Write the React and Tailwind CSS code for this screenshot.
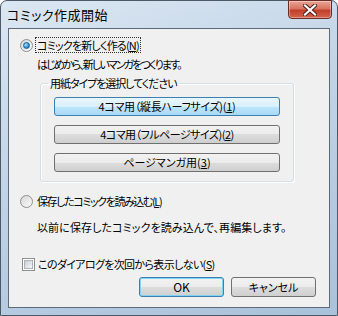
import React from 'react'

const font = "font-['Noto_Sans_CJK_JP','Liberation_Sans',sans-serif]"

const Radio = ({ checked }) => (
  <span className="w-[13px] h-[13px] rounded-full border border-[#8e8f8f] bg-gradient-to-br from-[#d6d6d6] to-[#fbfbfb] flex items-center justify-center shrink-0">
    {checked && (
      <span className="w-[7px] h-[7px] rounded-full bg-[radial-gradient(circle_at_35%_35%,#b9e4fb,#2a8fd0_60%,#1c5a8c)] border border-[#1f5f95]" />
    )}
  </span>
)

const Checkbox = () => (
  <span className="w-[13px] h-[13px] border border-[#8e8f8f] bg-white flex items-center justify-center shrink-0">
    <span className="w-[9px] h-[9px] bg-gradient-to-br from-[#cbcfd5] to-[#f6f6f6] border border-[#aeb3b9]" />
  </span>
)

const btnClass = 'w-full h-[19px] rounded-[3px] border leading-none flex items-center justify-center'
const grayBtn = 'border-[#707070] bg-[linear-gradient(#f2f2f2_0%,#ebebeb_50%,#dddddd_50%,#cfcfcf_100%)] text-black'
const blueBtn = 'border-[#3c7fb1] bg-[linear-gradient(#eaf6fd_0%,#d9f0fc_50%,#bee6fd_50%,#a7d9f5_100%)] text-black'

export default function App() {
  return (
    <div className={`w-[338px] h-[316px] ${font} text-[11px] text-black [font-feature-settings:'palt']`}>
      <div className="w-full h-full rounded-t-[7px] border border-[#4d5a66] bg-[linear-gradient(160deg,#dbe7f3_0%,#c3d5e7_40%,#a9c1da_100%)] flex flex-col px-[7px] pb-[7px]">
        {/* title bar */}
        <div className="h-[27px] flex items-start justify-between shrink-0">
          <span className="mt-[4px] ml-[-1px] text-[13px] tracking-[0.5px] text-black">コミック作成開始</span>
          <div className="w-[44px] h-[19px] mr-[-2px] mt-[-1px] rounded-b-[4px] border border-[#6b2a22] bg-[linear-gradient(#e9a597_0%,#d8735f_45%,#c0402a_55%,#d4634b_100%)] flex items-center justify-center shadow-[inset_0_0_0_1px_rgba(255,255,255,0.35)]">
            <svg width="14" height="12" viewBox="0 0 14 12">
              <path d="M2 1.5 L12 10.5 M12 1.5 L2 10.5" stroke="#4a1c16" strokeWidth="4" strokeLinecap="square" />
              <path d="M2 1.5 L12 10.5 M12 1.5 L2 10.5" stroke="#ffffff" strokeWidth="2.2" strokeLinecap="square" />
            </svg>
          </div>
        </div>

        {/* client area */}
        <div className="flex-1 border border-[#5c6b7a] bg-[#f0f0f0] flex flex-col pt-[8px] pl-[11px] pr-[13px]">
          <div className="h-[16px] flex items-center gap-[3px]">
            <Radio checked />
            <span className="leading-[14px] outline outline-1 outline-dotted outline-[#333] px-[1px] tracking-[-0.8px]">
              コミックを新しく作る(<u>N</u>)
            </span>
          </div>
          <div className="h-[16px] mt-[3px] ml-[17px] flex items-center tracking-[-1.9px]">はじめから、新しいマンガをつくります。</div>

          <fieldset className="mt-[3px] ml-[20px] w-[254px] border border-[#d5dfe5] rounded-[3px] px-[13px] pb-[9px] pt-[6px] shadow-[inset_1px_1px_0_#fff,1px_1px_0_#fff]">
            <legend className="ml-[-6px] px-[2px] h-[16px] leading-[16px] tracking-[-1.05px]">用紙タイプを選択してください</legend>
            <div className="flex flex-col gap-[9px]">
              <button className={`${btnClass} ${blueBtn} tracking-[-0.3px]`}>4コマ用（縦長ハーフサイズ)(<u>1</u>)</button>
              <button className={`${btnClass} ${grayBtn} tracking-[-0.5px]`}>4コマ用（フルページサイズ)(<u>2</u>)</button>
              <button className={`${btnClass} ${grayBtn}`}>ページマンガ用(<u>3</u>)</button>
            </div>
          </fieldset>

          <div className="h-[16px] mt-[11px] flex items-center gap-[4px]">
            <Radio />
            <span className="tracking-[-1.4px]">保存したコミックを読み込む(<u>L</u>)</span>
          </div>
          <div className="h-[16px] mt-[10px] ml-[17px] flex items-center tracking-[0.1px]">以前に保存したコミックを読み込んで、再編集します。</div>

          <div className="h-[16px] mt-[21px] ml-[2px] flex items-center gap-[3px]">
            <Checkbox />
            <span className="tracking-[-0.65px]">このダイアログを次回から表示しない(<u>S</u>)</span>
          </div>

          <div className="mt-[5px] flex justify-end gap-[7px]">
            <button className="w-[85px] h-[20px] rounded-[3px] border border-[#3c7fb1] shadow-[inset_0_0_0_1px_#7fd3f5] bg-[linear-gradient(#f2f2f2_0%,#ebebeb_50%,#dddddd_50%,#cfcfcf_100%)] text-[12px] leading-none flex items-center justify-center">OK</button>
            <button className={`w-[85px] h-[20px] rounded-[3px] border ${grayBtn} leading-none flex items-center justify-center`}>キャンセル</button>
          </div>
        </div>
      </div>
    </div>
  )
}
